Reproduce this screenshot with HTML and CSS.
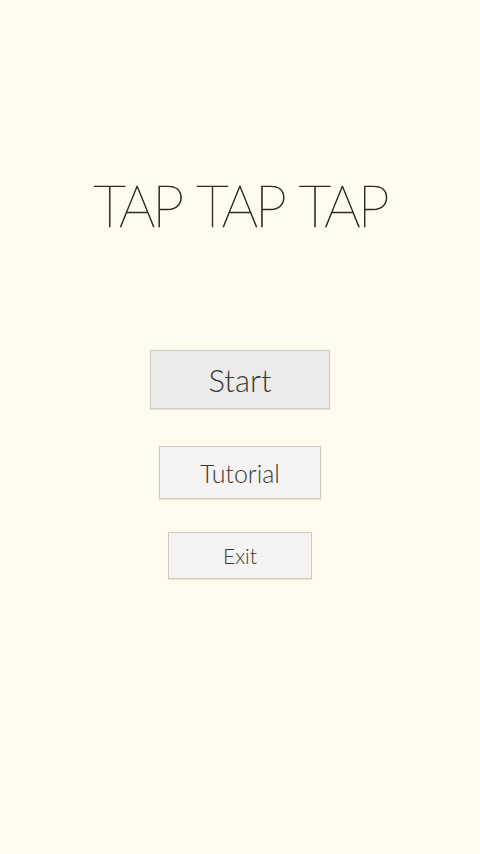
FILE: index.html
```html
<!DOCTYPE html>
<html lang="en">
<head>
<meta charset="UTF-8">
<meta name="viewport" content="width=device-width, initial-scale=1.0">
<title>Tap Tap Tap</title>
<link rel="stylesheet" href="styles.css">
</head>
<body>

<div class="menu">
  <h1 class="title">TAP TAP TAP</h1>

  <div class="buttons">
    <button class="btn btn-start">Start</button>
    <button class="btn btn-tutorial">Tutorial</button>
    <button class="btn btn-exit">Exit</button>
  </div>
</div>

</body>
</html>
```

FILE: styles.css
```css
/* General Styling */
body {
  margin: 0;
  height: 100vh;
  background-color: #fffbee; /* Cream background */
  color: #2e2c28;
  font-family: Lato, "Open Sans", sans-serif;
}

.menu {
  display: flex;
  flex-direction: column;
  align-items: center;
  padding-top: 171px;
}

.title {
  margin: 0;
  font-size: 57px;
  font-weight: 100;
  line-height: 68px;
  letter-spacing: -3px;
  word-spacing: 5px;
  -webkit-text-stroke: 0.7px #2e2c28;
}

.buttons {
  display: flex;
  flex-direction: column;
  align-items: center;
  margin-top: 111px;
}

.btn {
  font-family: inherit;
  font-weight: 300;
  color: #3a3935;
  background-color: #f5f4f2;
  border: 1px solid #cfcac0;
  padding: 0;
  box-shadow: 0 1px 1px rgba(0, 0, 0, 0.08);
}

.btn-start {
  width: 180px;
  height: 59px;
  font-size: 31px;
  background-color: #ebebeb;
}

.btn-tutorial {
  width: 162px;
  height: 53px;
  font-size: 25px;
  margin-top: 37px;
}

.btn-exit {
  width: 144px;
  height: 47px;
  font-size: 21px;
  margin-top: 33px;
}
```
